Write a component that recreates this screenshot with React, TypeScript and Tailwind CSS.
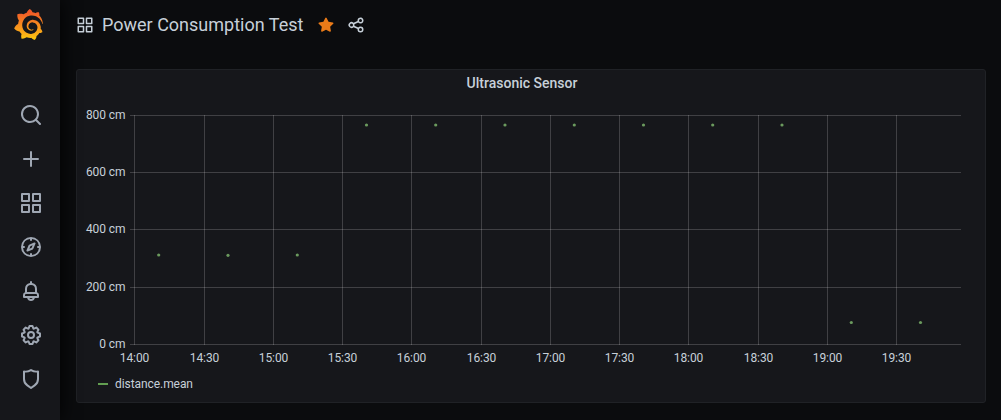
import React from 'react';
import { SiGrafana } from 'react-icons/si';

const APPS =
  'M10,13H3a1,1,0,0,0-1,1v7a1,1,0,0,0,1,1h7a1,1,0,0,0,1-1V14A1,1,0,0,0,10,13ZM9,20H4V15H9ZM21,2H14a1,1,0,0,0-1,1v7a1,1,0,0,0,1,1h7a1,1,0,0,0,1-1V3A1,1,0,0,0,21,2ZM20,9H15V4h5Zm1,4H14a1,1,0,0,0-1,1v7a1,1,0,0,0,1,1h7a1,1,0,0,0,1-1V14A1,1,0,0,0,21,13Zm-1,7H15V15h5ZM10,2H3A1,1,0,0,0,2,3v7a1,1,0,0,0,1,1h7a1,1,0,0,0,1-1V3A1,1,0,0,0,10,2ZM9,9H4V4H9Z';
const SHARE =
  'M18,14a4,4,0,0,0-3.08,1.48l-5.1-2.35a3.64,3.64,0,0,0,0-2.26l5.1-2.35A4,4,0,1,0,14,6a4.17,4.17,0,0,0,.07.71L8.79,9.14a4,4,0,1,0,0,5.72l5.28,2.43A4.17,4.17,0,0,0,14,18a4,4,0,1,0,4-4ZM18,4a2,2,0,1,1-2,2A2,2,0,0,1,18,4ZM6,14a2,2,0,1,1,2-2A2,2,0,0,1,6,14Zm12,6a2,2,0,1,1,2-2A2,2,0,0,1,18,20Z';
const STAR =
  'M17.56,21a1,1,0,0,1-.46-.11L12,18.22l-5.1,2.67a1,1,0,0,1-1.45-1.06l1-5.63L2.28,10.22a1,1,0,0,1,.55-1.71l5.7-.83,2.51-5.13a1,1,0,0,1,1.8,0l2.54,5.12,5.7.83a1,1,0,0,1,.55,1.71L17.5,14.19l1,5.63a1,1,0,0,1-.4,1A1,1,0,0,1,17.56,21Z';

const NAV = [
  {
    label: 'Search',
    d: 'M21.71,20.29,18,16.61A9,9,0,1,0,16.61,18l3.68,3.68a1,1,0,0,0,1.42,0A1,1,0,0,0,21.71,20.29ZM11,18a7,7,0,1,1,7-7A7,7,0,0,1,11,18Z',
  },
  {
    label: 'Create',
    d: 'M19,11H13V5a1,1,0,0,0-2,0v6H5a1,1,0,0,0,0,2h6v6a1,1,0,0,0,2,0V13h6a1,1,0,0,0,0-2Z',
  },
  { label: 'Dashboards', d: APPS },
  {
    label: 'Explore',
    d: 'M12,2A10,10,0,1,0,22,12,10,10,0,0,0,12,2Zm1,17.93V19a1,1,0,0,0-2,0v.93A8,8,0,0,1,4.07,13H5a1,1,0,0,0,0-2H4.07A8,8,0,0,1,11,4.07V5a1,1,0,0,0,2,0V4.07A8,8,0,0,1,19.93,11H19a1,1,0,0,0,0,2h.93A8,8,0,0,1,13,19.93ZM15.14,7.55l-5,2.12a1,1,0,0,0-.52.52l-2.12,5a1,1,0,0,0,.21,1.1,1,1,0,0,0,.7.3.93.93,0,0,0,.4-.09l5-2.12a1,1,0,0,0,.52-.52l2.12-5a1,1,0,0,0-1.31-1.31Zm-2.49,5.1-2.28,1,1-2.28,2.28-1Z',
  },
  {
    label: 'Alerting',
    d: 'M18,13.18V10a6,6,0,0,0-5-5.91V3a1,1,0,0,0-2,0V4.09A6,6,0,0,0,6,10v3.18A3,3,0,0,0,4,16v2a1,1,0,0,0,1,1H8.14a4,4,0,0,0,7.72,0H19a1,1,0,0,0,1-1V16A3,3,0,0,0,18,13.18ZM8,10a4,4,0,0,1,8,0v3H8Zm4,10a2,2,0,0,1-1.72-1h3.44A2,2,0,0,1,12,20Zm6-3H6V16a1,1,0,0,1,1-1H17a1,1,0,0,1,1,1Z',
  },
  {
    label: 'Configuration',
    d: 'M21.32,9.55l-1.89-.63.89-1.78A1,1,0,0,0,20.13,6L18,3.87a1,1,0,0,0-1.15-.19l-1.78.89-.63-1.89A1,1,0,0,0,13.5,2h-3a1,1,0,0,0-.95.68L8.92,4.57,7.14,3.68A1,1,0,0,0,6,3.87L3.87,6a1,1,0,0,0-.19,1.15l.89,1.78-1.89.63A1,1,0,0,0,2,10.5v3a1,1,0,0,0,.68.95l1.89.63-.89,1.78A1,1,0,0,0,3.87,18L6,20.13a1,1,0,0,0,1.15.19l1.78-.89.63,1.89a1,1,0,0,0,.95.68h3a1,1,0,0,0,.95-.68l.63-1.89,1.78.89A1,1,0,0,0,18,20.13L20.13,18a1,1,0,0,0,.19-1.15l-.89-1.78,1.89-.63A1,1,0,0,0,22,13.5v-3A1,1,0,0,0,21.32,9.55ZM20,12.78l-1.2.4A2,2,0,0,0,17.64,16l.57,1.14-1.1,1.1L16,17.64a2,2,0,0,0-2.79,1.16l-.4,1.2H11.22l-.4-1.2A2,2,0,0,0,8,17.64l-1.14.57-1.1-1.1L6.36,16A2,2,0,0,0,5.2,13.18L4,12.78V11.22l1.2-.4A2,2,0,0,0,6.36,8L5.79,6.89l1.1-1.1L8,6.36A2,2,0,0,0,10.82,5.2l.4-1.2h1.56l.4,1.2A2,2,0,0,0,16,6.36l1.14-.57,1.1,1.1L17.64,8a2,2,0,0,0,1.16,2.79l1.2.4ZM12,8a4,4,0,1,0,4,4A4,4,0,0,0,12,8Zm0,6a2,2,0,1,1,2-2A2,2,0,0,1,12,14Z',
  },
  {
    label: 'Server Admin',
    d: 'M19.63,3.65a1,1,0,0,0-.84-.2,8,8,0,0,1-6.22-1.27,1,1,0,0,0-1.14,0A8,8,0,0,1,5.21,3.45a1,1,0,0,0-.84.2A1,1,0,0,0,4,4.43v7.45a9,9,0,0,0,3.77,7.33l3.65,2.6a1,1,0,0,0,1.16,0l3.65-2.6A9,9,0,0,0,20,11.88V4.43A1,1,0,0,0,19.63,3.65ZM18,11.88a7,7,0,0,1-2.93,5.7L12,19.77,8.93,17.58A7,7,0,0,1,6,11.88V5.58a10,10,0,0,0,6-1.39,10,10,0,0,0,6,1.39Z',
  },
];

function Icon({ d, className }: { d: string; className: string }) {
  return (
    <svg viewBox="0 0 24 24" fill="currentColor" aria-hidden="true" className={className}>
      <path d={d} />
    </svg>
  );
}

function Logo() {
  return (
    <div className="flex h-[93px] justify-center pt-[9px]">
      <svg aria-hidden="true" className="size-0">
        <defs>
          <linearGradient id="logo-gradient" x1="0" y1="1.1" x2="0" y2="0.1">
            <stop offset="0" stopColor="#fcd80a" />
            <stop offset="0.3" stopColor="#fbae17" />
            <stop offset="1" stopColor="#f05a28" />
          </linearGradient>
        </defs>
      </svg>
      <SiGrafana className="ml-[-4px] size-[31px] fill-[url(#logo-gradient)]" />
    </div>
  );
}

/* Chart coordinates are relative to the panel's content box. */
const X_TICKS: [number, string][] = [
  [57, '14:00'],
  [127, '14:30'],
  [196, '15:00'],
  [265, '15:30'],
  [334, '16:00'],
  [404, '16:30'],
  [473, '17:00'],
  [542, '17:30'],
  [611, '18:00'],
  [681, '18:30'],
  [750, '19:00'],
  [819, '19:30'],
];
const Y_TICKS: [number, string][] = [
  [15, '800 cm'],
  [72, '600 cm'],
  [129, '400 cm'],
  [187, '200 cm'],
  [244, '0 cm'],
];
const POINTS: [number, number][] = [
  [81.7, 155], [151, 155.3], [220.3, 155],
  [289.5, 25], [358.7, 25], [428, 25], [497.3, 25], [566.5, 25], [635.7, 25], [705, 25],
  [774.3, 222.5], [843.5, 222.5],
];

function Chart() {
  return (
    <svg width="908" height="270" viewBox="0 0 908 270" className="block">
      <g fill="#ffffff" fillOpacity="0.18" shapeRendering="crispEdges">
        {X_TICKS.map(([x, t]) => (
          <rect key={t} x={x} y="15" width="1" height="230" />
        ))}
        {Y_TICKS.map(([y, t]) => (
          <rect key={t} x="53" y={y} width="831" height="1" />
        ))}
      </g>
      <g className="fill-[#c7d0d9] font-['Roboto',sans-serif] text-[12px] tracking-[-0.08px]">
        {X_TICKS.map(([x, t]) => (
          <text key={t} x={x + 0.5} y="262" textAnchor="middle">{t}</text>
        ))}
        {Y_TICKS.map(([y, t]) => (
          <text key={t} x="48.5" y={y + 4} textAnchor="end">{t}</text>
        ))}
      </g>
      <g fill="#6b9a5e">
        {POINTS.map(([x, y]) => (
          <circle key={x} cx={x} cy={y} r="1.6" />
        ))}
      </g>
    </svg>
  );
}

export default function App() {
  return (
    <div className="flex h-[420px] w-[1001px] overflow-hidden bg-[#0b0c0e] font-['Roboto',sans-serif] text-[#c7d0d9]">
      <nav className="z-10 flex w-[60px] shrink-0 flex-col bg-[#16171b] shadow-[0_0_20px_#000000]">
        <Logo />
        {NAV.map(({ label, d }) => (
          <a key={label} aria-label={label} className="flex h-11 items-center justify-center pl-[2px]">
            <Icon d={d} className="size-6 text-[#9fa7b3]" />
          </a>
        ))}
      </nav>
      <main className="flex flex-col pl-4">
        <header className="flex h-[69px] items-start">
          <div className="flex h-[50px] items-center">
            <Icon d={APPS} className="size-[18px] text-[#c7d0d9]" />
            <h1 className="ml-2 pb-[2px] text-[18px] leading-[27px]">Power Consumption Test</h1>
            <Icon d={STAR} className="ml-[14px] size-[18px] text-[#eb7b18]" />
            <Icon d={SHARE} className="ml-3 size-[18px] text-[#c7d0d9]" />
          </div>
        </header>
        <section className="h-[334px] w-[910px] rounded-[3px] border border-[#202226] bg-[#16171b]">
          <h2 className="h-[30px] pr-[18px] text-center text-[14px] leading-[26px] font-medium">
            Ultrasonic Sensor
          </h2>
          <Chart />
          <div className="flex items-center pl-[21px] text-[12px] leading-[28px] tracking-[-0.07px]">
            <span className="mr-[7px] h-[2px] w-[10px] bg-[#629e51]" />
            distance.mean
          </div>
        </section>
      </main>
    </div>
  );
}
